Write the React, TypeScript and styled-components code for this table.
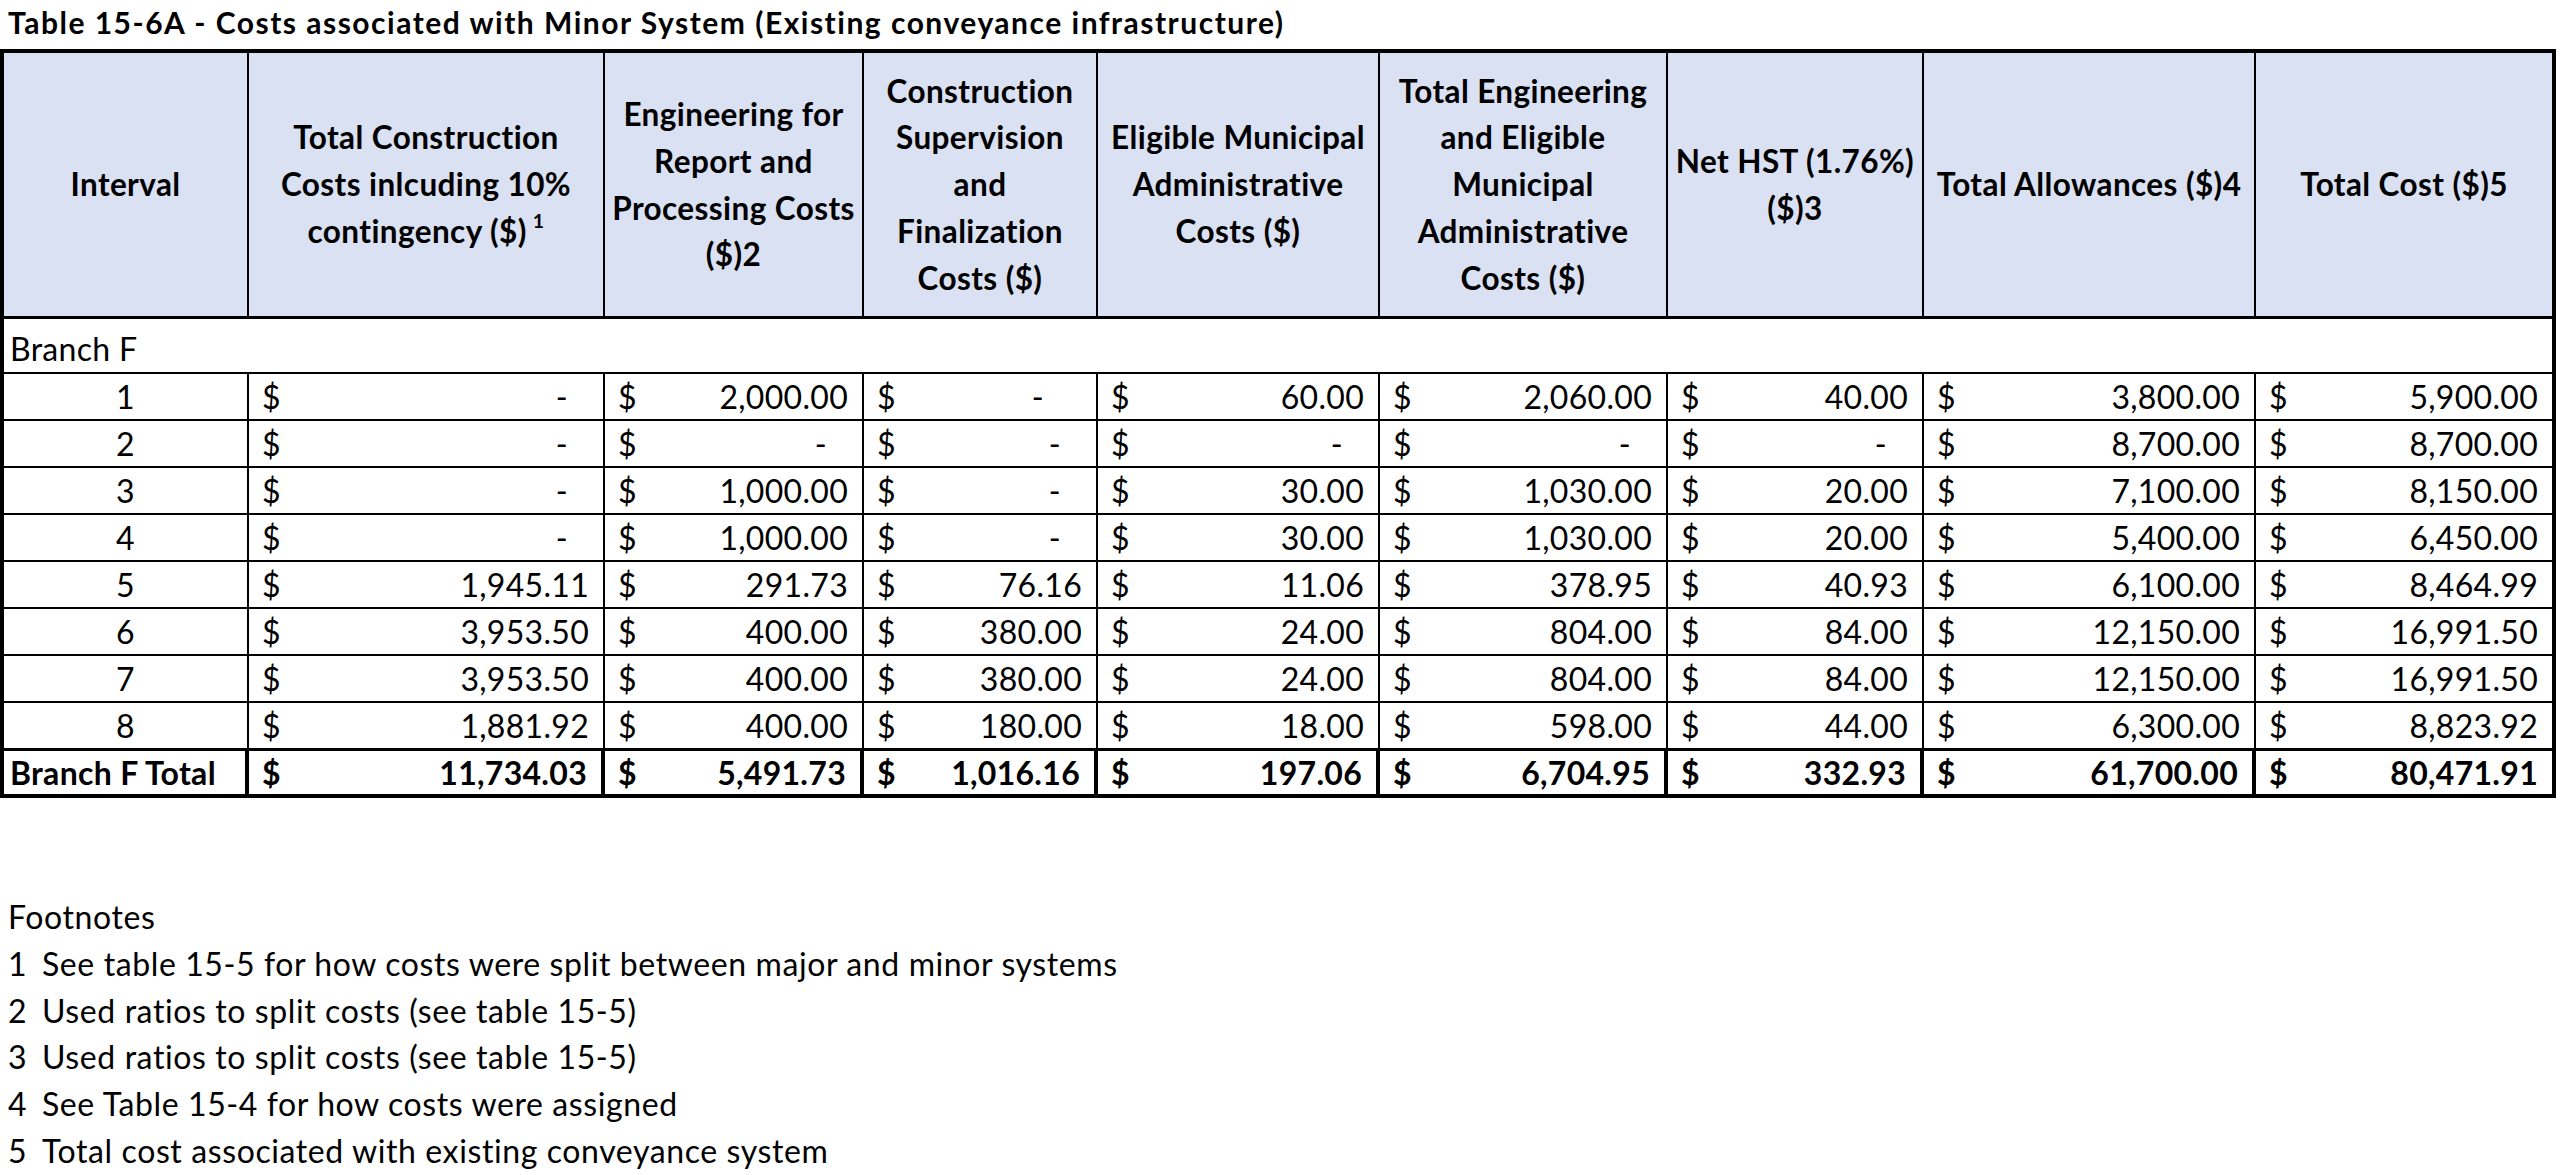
import React from 'react';
import styled, { createGlobalStyle } from 'styled-components';

const GlobalStyle = createGlobalStyle`
  html, body { margin: 0; padding: 0; background: #fff; }
  body { font-family: Lato, "Liberation Sans", sans-serif; color: #000; }
`;

const Page = styled.div`
  width: 2560px;
  min-height: 1175px;
  background: #fff;
  font-family: Lato, "Liberation Sans", sans-serif;
  color: #000;
`;

const Title = styled.h1`
  margin: 0;
  height: 49px;
  padding-left: 8px;
  font-size: 30px;
  font-weight: 700;
  letter-spacing: 1.5px;
  line-height: 44px;
  white-space: nowrap;
`;

const Grid = styled.div`
  display: grid;
  box-sizing: border-box;
  width: 2556px;
  grid-template-columns: 245px 356px 259px 234px 282px 288px 256px 332px 300px;
  grid-template-rows: 266px 55px repeat(8, 47px) 48px;
  border-top: 4px solid #000;
  border-left: 4px solid #000;
`;

const HeaderCell = styled.div<{ $last?: boolean }>`
  box-sizing: border-box;
  background: #d9e1f2;
  border-right: ${(p) => (p.$last ? 4 : 2)}px solid #000;
  border-bottom: 3px solid #000;
  display: flex;
  flex-direction: column;
  justify-content: center;
  align-items: center;
  text-align: center;
  font-size: 31.5px;
  font-weight: 700;
  letter-spacing: 0.4px;
  line-height: 46.7px;
  white-space: nowrap;
`;

const Sup = styled.sup`
  font-size: 0.62em;
  line-height: 0;
  vertical-align: 0.75em;
  margin-left: 6px;
`;

const BranchCell = styled.div`
  box-sizing: border-box;
  grid-column: 1 / -1;
  border-right: 4px solid #000;
  border-bottom: 2px solid #000;
  display: flex;
  align-items: flex-end;
  padding-left: 6px;
  font-size: 32px;
  letter-spacing: 0.3px;
  line-height: 47px;
`;

const BodyCell = styled.div<{ $last?: boolean; $total?: boolean }>`
  box-sizing: border-box;
  border-right: ${(p) => (p.$last || p.$total ? 4 : 2)}px solid #000;
  border-bottom: ${(p) => (p.$total ? 4 : 2)}px solid #000;
  border-top: ${(p) => (p.$total ? 1 : 0)}px solid #000;
  display: flex;
  align-items: center;
  font-size: 32px;
  font-weight: ${(p) => (p.$total ? 700 : 400)};
  letter-spacing: 0.3px;
  line-height: 44px;
  white-space: nowrap;
`;

const IntervalCell = styled(BodyCell)<{ $label?: boolean }>`
  justify-content: ${(p) => (p.$label ? 'flex-start' : 'center')};
  padding-left: ${(p) => (p.$label ? 6 : 0)}px;
`;

const MoneyCell = styled(BodyCell)`
  justify-content: space-between;
  padding: 0 14px 0 13px;
`;

const Dash = styled.span<{ $wide?: boolean }>`
  margin-right: ${(p) => (p.$wide ? 38 : 21)}px;
`;

const Footnotes = styled.div`
  padding-top: 96px;
  padding-left: 8px;
  font-size: 32px;
  letter-spacing: 0.6px;
  line-height: 46.8px;
  white-space: nowrap;
`;

const FootnoteRow = styled.div`
  display: grid;
  grid-template-columns: 34px auto;
`;

type Val = string | null | 'wide';

const headers: React.ReactNode[][] = [
  ['Interval'],
  ['Total Construction', 'Costs inlcuding 10%', <>contingency ($)<Sup>1</Sup></>],
  ['Engineering for', 'Report and', 'Processing Costs', '($)2'],
  ['Construction', 'Supervision', 'and', 'Finalization', 'Costs ($)'],
  ['Eligible Municipal', 'Administrative', 'Costs ($)'],
  ['Total Engineering', 'and Eligible', 'Municipal', 'Administrative', 'Costs ($)'],
  ['Net HST (1.76%)', '($)3'],
  ['Total Allowances ($)4'],
  ['Total Cost ($)5'],
];

const rows: { id: string; vals: Val[] }[] = [
  { id: '1', vals: [null, '2,000.00', 'wide', '60.00', '2,060.00', '40.00', '3,800.00', '5,900.00'] },
  { id: '2', vals: [null, null, null, null, null, null, '8,700.00', '8,700.00'] },
  { id: '3', vals: [null, '1,000.00', null, '30.00', '1,030.00', '20.00', '7,100.00', '8,150.00'] },
  { id: '4', vals: [null, '1,000.00', null, '30.00', '1,030.00', '20.00', '5,400.00', '6,450.00'] },
  { id: '5', vals: ['1,945.11', '291.73', '76.16', '11.06', '378.95', '40.93', '6,100.00', '8,464.99'] },
  { id: '6', vals: ['3,953.50', '400.00', '380.00', '24.00', '804.00', '84.00', '12,150.00', '16,991.50'] },
  { id: '7', vals: ['3,953.50', '400.00', '380.00', '24.00', '804.00', '84.00', '12,150.00', '16,991.50'] },
  { id: '8', vals: ['1,881.92', '400.00', '180.00', '18.00', '598.00', '44.00', '6,300.00', '8,823.92'] },
];

const totals = ['11,734.03', '5,491.73', '1,016.16', '197.06', '6,704.95', '332.93', '61,700.00', '80,471.91'];

const notes = [
  'See table 15-5 for how costs were split between major and minor systems',
  'Used ratios to split costs (see table 15-5)',
  'Used ratios to split costs (see table 15-5)',
  'See Table 15-4 for how costs were assigned',
  'Total cost associated with existing conveyance system',
];

function renderValue(v: Val) {
  if (v === null) return <Dash>-</Dash>;
  if (v === 'wide') return <Dash $wide>-</Dash>;
  return <span>{v}</span>;
}

export default function App() {
  return (
    <Page>
      <GlobalStyle />
      <Title>Table 15-6A - Costs associated with Minor System (Existing conveyance infrastructure)</Title>
      <Grid>
        {headers.map((lines, i) => (
          <HeaderCell key={i} $last={i === headers.length - 1}>
            {lines.map((l, j) => (
              <div key={j}>{l}</div>
            ))}
          </HeaderCell>
        ))}
        <BranchCell>Branch F</BranchCell>
        {rows.map((r) => (
          <React.Fragment key={r.id}>
            <IntervalCell>{r.id}</IntervalCell>
            {r.vals.map((v, i) => (
              <MoneyCell key={i} $last={i === r.vals.length - 1}>
                <span>$</span>
                {renderValue(v)}
              </MoneyCell>
            ))}
          </React.Fragment>
        ))}
        <IntervalCell $label $total>Branch F Total</IntervalCell>
        {totals.map((t, i) => (
          <MoneyCell key={i} $total $last={i === totals.length - 1}>
            <span>$</span>
            <span>{t}</span>
          </MoneyCell>
        ))}
      </Grid>
      <Footnotes>
        <div>Footnotes</div>
        {notes.map((n, i) => (
          <FootnoteRow key={i}>
            <span>{i + 1}</span>
            <span>{n}</span>
          </FootnoteRow>
        ))}
      </Footnotes>
    </Page>
  );
}
